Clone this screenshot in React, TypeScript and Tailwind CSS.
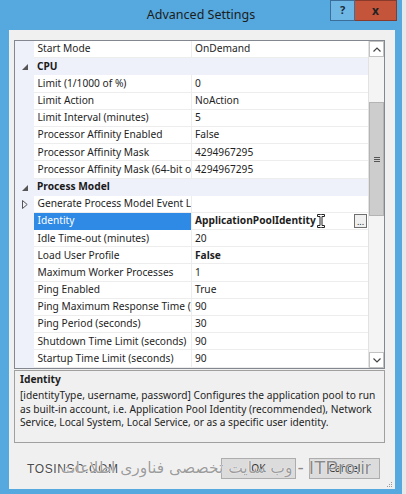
import React from "react";

type Row = {
  cat?: boolean;
  label: string;
  value?: string;
  bold?: boolean;
  sel?: boolean;
  expand?: boolean;
};

const rows: Row[] = [
  { label: "Start Mode", value: "OnDemand" },
  { cat: true, label: "CPU" },
  { label: "Limit (1/1000 of %)", value: "0" },
  { label: "Limit Action", value: "NoAction" },
  { label: "Limit Interval (minutes)", value: "5" },
  { label: "Processor Affinity Enabled", value: "False" },
  { label: "Processor Affinity Mask", value: "4294967295" },
  { label: "Processor Affinity Mask (64-bit option)", value: "4294967295" },
  { cat: true, label: "Process Model" },
  { label: "Generate Process Model Event Log Entry", value: "", expand: true },
  { label: "Identity", value: "ApplicationPoolIdentity", bold: true, sel: true },
  { label: "Idle Time-out (minutes)", value: "20" },
  { label: "Load User Profile", value: "False", bold: true },
  { label: "Maximum Worker Processes", value: "1" },
  { label: "Ping Enabled", value: "True" },
  { label: "Ping Maximum Response Time (seconds)", value: "90" },
  { label: "Ping Period (seconds)", value: "30" },
  { label: "Shutdown Time Limit (seconds)", value: "90" },
  { label: "Startup Time Limit (seconds)", value: "90" },
];

function IBeam() {
  return (
    <svg width="8" height="14" viewBox="0 0 8 14" className="ml-[1px] shrink-0">
      <path
        d="M0.5 0.5h3l0.5 0.5 0.5-0.5h3v2h-2.5v9h2.5v2h-3l-0.5-0.5-0.5 0.5h-3v-2h2.5v-9h-2.5z"
        fill="#fff"
        stroke="#222"
        strokeWidth="1"
      />
    </svg>
  );
}

function GridRow({ r }: { r: Row }) {
  if (r.cat) {
    return (
      <div className="flex h-[17.2px] items-center bg-[#eef0fa]">
        <div className="flex w-[19px] justify-center pt-[1px]">
          <svg width="6" height="6" viewBox="0 0 6 6">
            <polygon points="6,0 6,6 0,6" fill="#555" />
          </svg>
        </div>
        <span className="pl-[3px] font-bold text-[#1a1a1a]">{r.label}</span>
      </div>
    );
  }
  return (
    <div className="flex h-[17.2px]">
      <div className="flex w-[19px] items-center justify-center bg-[#eef0fa]">
        {r.expand && (
          <svg width="6" height="9" viewBox="0 0 6 9">
            <polygon points="0.5,0.5 5.2,4.5 0.5,8.5" fill="none" stroke="#555" />
          </svg>
        )}
      </div>
      <div
        className={
          r.sel
            ? "flex w-[157px] items-center overflow-hidden whitespace-nowrap border-b border-[#2f8ae6] bg-[#2f8ae6] pl-[3.5px] text-white"
            : "flex w-[157px] items-center overflow-hidden whitespace-nowrap border-b border-[#ededed] pl-[3.5px]"
        }
      >
        {r.label}
      </div>
      <div className="w-px bg-[#ededed]" />
      <div className="flex flex-1 items-center overflow-hidden whitespace-nowrap border-b border-[#ededed] pl-[3px]">
        <span className={r.bold ? "font-bold" : ""}>{r.value}</span>
        {r.sel && (
          <>
            <IBeam />
            <div className="ml-auto mr-[1px] flex h-[14px] w-[13px] items-end justify-center border border-[#6f6f6f] bg-[#f0f0f0] pb-[1px] text-[9px] leading-[8px]">
              ...
            </div>
          </>
        )}
      </div>
    </div>
  );
}

function ScrollBar() {
  return (
    <div className="flex w-[16px] flex-col border-l border-[#e2e2e2] bg-[#f4f4f4]">
      <div className="flex h-[16px] items-center justify-center border border-[#c2c2c2] bg-white">
        <svg width="8" height="5" viewBox="0 0 8 5">
          <polyline points="0.5,4.5 4,1 7.5,4.5" fill="none" stroke="#444" strokeWidth="1.2" />
        </svg>
      </div>
      <div className="h-[45px]" />
      <div className="flex h-[114px] items-center justify-center border border-[#b4b4b4] bg-[#cdcdcd]">
        <div className="flex w-[6px] flex-col gap-[1px]">
          <div className="h-px bg-[#555]" />
          <div className="h-px bg-[#555]" />
          <div className="h-px bg-[#555]" />
        </div>
      </div>
      <div className="flex-1" />
      <div className="flex h-[16px] items-center justify-center border border-[#c2c2c2] bg-white">
        <svg width="8" height="5" viewBox="0 0 8 5">
          <polyline points="0.5,0.5 4,4 7.5,0.5" fill="none" stroke="#444" strokeWidth="1.2" />
        </svg>
      </div>
    </div>
  );
}

export default function App() {
  return (
    <div className="flex h-[494px] w-[406px] overflow-hidden bg-[#e4e4e4] font-['Noto_Sans',sans-serif] text-[10.2px] text-[#1e1e1e]">
      <div className="flex w-[402px] flex-col bg-[#55a9de]">
        {/* caption */}
        <div className="relative flex h-[30px] items-center justify-center">
          <span className="text-[12.5px] text-[#1c1c1c]">Advanced Settings</span>
          <div className="absolute right-[5px] top-0 flex">
            <div className="flex h-[21px] w-[25px] items-center justify-center border border-[#3b6f99] bg-[#6fb8e6] text-[11px] font-bold text-[#1c2a38]">
              ?
            </div>
            <div className="flex h-[21px] w-[42px] items-center justify-center border border-[#8a3a2a] border-l-0 bg-[#c4553b] text-[12px] font-bold text-[#222]">
              x
            </div>
          </div>
        </div>

        {/* client area */}
        <div className="relative mb-[5px] ml-[9px] mr-[7px] flex flex-1 flex-col bg-[#f0f0f0] pl-[5px] pr-[10px] pt-[10px]">
          <div className="flex h-[329px] border border-[#828790] bg-white">
            <div className="flex flex-1 flex-col">
              {rows.map((r) => (
                <GridRow key={r.label} r={r} />
              ))}
            </div>
            <ScrollBar />
          </div>

          <div className="mt-[1px] flex h-[73px] flex-col border border-[#a0a0a0] pl-[5px] pt-[1px]">
            <div className="h-[14px] font-bold leading-[14px]">Identity</div>
            <div className="mt-[3px] whitespace-nowrap leading-[13.5px]">
              [identityType, username, password] Configures the application pool to run
              <br />
              as built-in account, i.e. Application Pool Identity (recommended), Network
              <br />
              Service, Local System, Local Service, or as a specific user identity.
            </div>
          </div>

          <div className="relative mt-[15px] flex h-[21px] justify-end gap-[13px] pr-[5px]">
            <button className="w-[75px] border border-[#adadad] bg-[#dcdcdc] text-[#333]">OK</button>
            <button className="w-[71px] border border-[#adadad] bg-[#dcdcdc] text-[#333]">Cancel</button>

            {/* watermark over the buttons */}
            <span className="pointer-events-none absolute left-[13px] top-[4px] whitespace-nowrap font-['Liberation_Sans',sans-serif] text-[12px] leading-[14px] tracking-[0.6px] text-[#4a4a4a] [text-shadow:0_0_1px_#fff,0_0_2px_#fff]">
              TOSINSO.COM
            </span>
            <div className="pointer-events-none absolute right-[14px] top-[-2px] flex h-[24px] items-center gap-[5px] whitespace-nowrap">
              <span
                dir="rtl"
                className="font-['DejaVu_Sans',sans-serif] text-[15.5px] leading-[20px] text-[#9c9c9c] [text-shadow:0_0_1px_#fff,0_0_1px_#fff]"
              >
                وب سایت تخصصی فناوری اطلاعات
              </span>
              <span className="font-['Liberation_Sans',sans-serif] text-[19px] leading-[20px] text-[#8a8a8a] [text-shadow:0_0_1px_#fff,0_0_1px_#fff]">
                -
              </span>
              <span className="font-['Liberation_Sans',sans-serif] text-[19px] leading-[20px] text-[#8a8a8a] [text-shadow:0_0_1px_#fff,0_0_1px_#fff]">
                ITPro.ir
              </span>
            </div>
          </div>

          <svg width="7" height="7" viewBox="0 0 7 7" className="absolute bottom-[1px] right-[2px]">
            <rect x="5" y="1" width="1" height="1" fill="#9a9a9a" />
            <rect x="3" y="3" width="1" height="1" fill="#9a9a9a" />
            <rect x="5" y="3" width="1" height="1" fill="#9a9a9a" />
            <rect x="1" y="5" width="1" height="1" fill="#9a9a9a" />
            <rect x="3" y="5" width="1" height="1" fill="#9a9a9a" />
            <rect x="5" y="5" width="1" height="1" fill="#9a9a9a" />
          </svg>
        </div>
      </div>
      <div className="flex-1 bg-[#e8e8e8]" />
    </div>
  );
}
